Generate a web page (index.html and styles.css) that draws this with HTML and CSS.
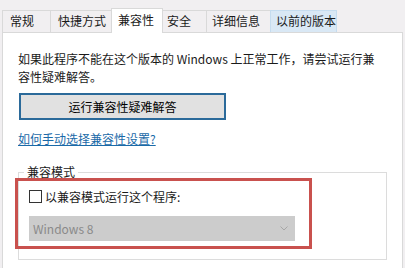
FILE: index.html
```
<!DOCTYPE html>
<html>
<head>
<meta charset="utf-8" />
<title>属性 - 兼容性</title>
<link rel="stylesheet" href="styles.css">
</head>
<body>
<div class="tabs">
  <span class="tab">常规</span>
  <span class="tab">快捷方式</span>
  <span class="tab active">兼容性</span>
  <span class="tab">安全</span>
  <span class="tab">详细信息</span>
  <span class="tab hover">以前的版本</span>
</div>
<div class="panel">
  <p class="intro">如果此程序不能在这个版本的 Windows 上正常工作，请尝试运行兼<br>容性疑难解答。</p>
  <a class="button" href="#">运行兼容性疑难解答</a>
  <a class="link" href="#">如何手动选择兼容性设置?</a>
  <fieldset class="group">
    <legend>兼容模式</legend>
    <div class="mark">
      <label class="check"><span class="box"></span>以兼容模式运行这个程序:</label>
      <div class="select">
        <span>Windows 8</span>
        <svg width="8" height="5" viewBox="0 0 8 5"><path d="M0.5 0.5 L4 4 L7.5 0.5" fill="none" stroke="#a6a6a6" stroke-width="1"/></svg>
      </div>
    </div>
  </fieldset>
</div>
</body>
</html>
```

FILE: styles.css
```
* {
  box-sizing: border-box;
  margin: 0;
  padding: 0;
}
html, body {
  height: 268px;
  overflow: hidden;
}
body {
  background-color: #f1eff1;
  color: #1a1a1a;
  font-family: "Noto Sans CJK SC", "Noto Sans", sans-serif;
  font-size: 12px;
}
.tabs {
  align-items: flex-end;
  display: flex;
  height: 32px;
  padding-left: 2px;
}
.tab {
  border: 1px solid #d9d9d9;
  border-bottom: 0 none;
  height: 22px;
  line-height: 20px;
  margin-right: -1px;
  padding-left: 7px;
  white-space: nowrap;
}
.tab:nth-child(1) { width: 49px; }
.tab:nth-child(2) { width: 62px; }
.tab:nth-child(3) { width: 52px; padding-left: 6px; }
.tab:nth-child(4) { width: 45px; padding-left: 4px; }
.tab:nth-child(5) { width: 65px; padding-left: 5px; }
.tab:nth-child(6) { width: 67px; padding-left: 5px; }
.tab.active {
  background-color: #fff;
  height: 25px;
  line-height: 22px;
  margin-bottom: -1px;
  position: relative;
  z-index: 1;
}
.tab.hover {
  background-color: #d9e8f5;
  border-color: #c5dcef;
}
.panel {
  background-color: #fff;
  border: 1px solid #d9d9d9;
  height: 240px;
  margin-left: 2px;
  padding: 17px 15px 0 15px;
  width: 401px;
}
.intro {
  line-height: 18px;
}
.button {
  background-color: #e1e1e1;
  border: 2px solid #2b6a9a;
  color: #000;
  display: block;
  height: 27px;
  line-height: 23px;
  margin: 7px 0 0 1px;
  text-align: center;
  text-decoration: none;
  width: 207px;
}
.link {
  color: #1a6aa8;
  display: inline-block;
  line-height: 18px;
  margin-top: 10px;
  text-decoration: underline;
}
.group {
  border: 1px solid #dcdcdc;
  margin-top: 18px;
  padding: 0 0 10px 0;
}
.group legend {
  line-height: 12px;
  margin-left: 5px;
  padding: 0 3px;
}
.mark {
  border: 3px solid #c9514e;
  margin-left: -4px;
  padding: 6px 0 5px 11px;
  width: 297px;
}
.check {
  align-items: center;
  display: flex;
  height: 18px;
}
.check .box {
  background-color: #fff;
  border: 1px solid #333;
  height: 13px;
  margin-right: 3px;
  width: 13px;
}
.select {
  align-items: center;
  background-color: #cccccc;
  color: #8a8a8a;
  display: flex;
  height: 25px;
  justify-content: space-between;
  margin-top: 11px;
  padding: 0 7px 0 4px;
  width: 266px;
}
```
